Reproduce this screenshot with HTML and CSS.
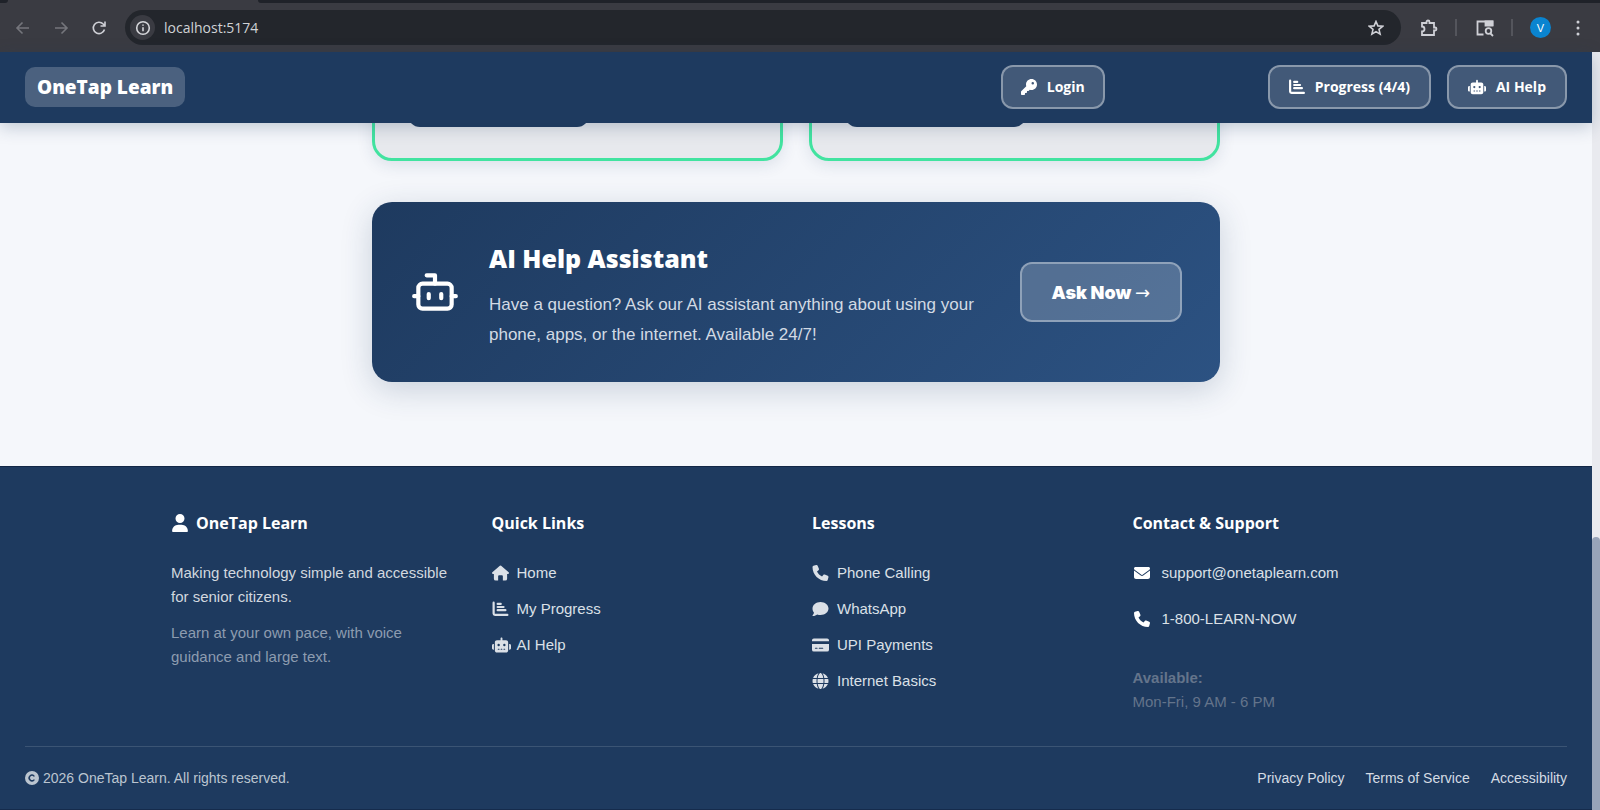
FILE: index.html
```
<!DOCTYPE html>
<html lang="en">
<head>
  <meta charset="UTF-8">
  <meta name="viewport" content="width=device-width, initial-scale=1.0">
  <title>OneTap Learn</title>
  <link rel="stylesheet" href="styles.css">
</head>
<body>
  <!-- icon set -->
  <svg class="sprite" aria-hidden="true">
    <symbol id="i-key" viewBox="0 0 512 512"><path fill-rule="evenodd" d="M336 352c97.200 0 176-78.800 176-176S433.200 0 336 0S160 78.800 160 176c0 18.700 2.900 36.800 8.300 53.700L7 391c-4.500 4.500-7 10.600-7 17v80c0 13.300 10.700 24 24 24h80c13.300 0 24-10.700 24-24V448h40c13.300 0 24-10.700 24-24V384h40c6.400 0 12.500-2.500 17-7l33.300-33.300c16.900 5.400 35 8.300 53.700 8.300zM376 96a40 40 0 1 1 0 80 40 40 0 1 1 0-80z"/></symbol>
    <symbol id="i-chart" viewBox="0 0 512 512"><path d="M36 52v348q0 44 44 44h396" fill="none" stroke="currentColor" stroke-width="70" stroke-linecap="round" stroke-linejoin="round"/><path d="M164 92h100M164 192h190M164 292h250" fill="none" stroke="currentColor" stroke-width="68" stroke-linecap="round"/></symbol>
    <symbol id="i-robot" viewBox="0 0 640 512"><path fill-rule="evenodd" d="M320 0c17.700 0 32 14.300 32 32V96H472c39.800 0 72 32.200 72 72V440c0 39.800-32.200 72-72 72H168c-39.800 0-72-32.200-72-72V168c0-39.800 32.200-72 72-72H288V32c0-17.700 14.300-32 32-32zM208 384c-8.800 0-16 7.200-16 16s7.200 16 16 16h32c8.800 0 16-7.200 16-16s-7.200-16-16-16H208zm96 0c-8.800 0-16 7.200-16 16s7.200 16 16 16h32c8.800 0 16-7.200 16-16s-7.200-16-16-16H304zm96 0c-8.800 0-16 7.200-16 16s7.200 16 16 16h32c8.800 0 16-7.200 16-16s-7.200-16-16-16H400zM264 256a40 40 0 1 0-80 0 40 40 0 1 0 80 0zm152 40a40 40 0 1 0 0-80 40 40 0 1 0 0 80zM48 224H64V416H48c-26.500 0-48-21.500-48-48V272c0-26.500 21.500-48 48-48zm544 0c26.500 0 48 21.500 48 48v96c0 26.500-21.500 48-48 48H576V224h16z"/></symbol>
    <symbol id="i-user" viewBox="0 0 448 512"><path d="M224 256A128 128 0 1 0 224 0a128 128 0 1 0 0 256zm-45.700 48C79.800 304 0 383.800 0 482.300C0 498.700 13.300 512 29.700 512h388.600c16.400 0 29.700-13.300 29.700-29.700C448 383.800 368.200 304 269.700 304z"/></symbol>
    <symbol id="i-home" viewBox="0 0 576 512"><path d="M266 9q22-18 44 0l254 224q14 14 10 30-6 24-30 24h-32v161q0 64-64 64h-80V368q0-32-32-32h-96q-32 0-32 32v144h-80q-64 0-64-64V287H32q-24 0-30-24-4-16 10-30z"/></symbol>
    <symbol id="i-phone" viewBox="0 0 512 512"><path d="M164.900 24.600c-7.700-18.600-28-28.500-47.400-23.200l-88 24C12.100 30.200 0 46 0 64C0 311.400 200.600 512 448 512c18 0 33.800-12.100 38.600-29.500l24-88c5.300-19.400-4.600-39.700-23.200-47.400l-96-40c-16.300-6.800-35.200-2.100-46.300 11.600L304.700 368C234.300 334.700 177.300 277.700 144 207.300L193.300 167c13.700-11.200 18.400-30 11.600-46.300z"/></symbol>
    <symbol id="i-comment" viewBox="0 0 512 512"><path d="M512 240c0 115-115 208-256 208-37 0-72-6-104-18-34 25-84 50-136 50-15 0-21-17-11-27 20-21 38-50 43-76C18 341 0 293 0 240 0 125 115 32 256 32s256 93 256 208z"/></symbol>
    <symbol id="i-card" viewBox="0 0 576 512"><path fill-rule="evenodd" d="M64 32h448q64 0 64 64v32H0V96q0-64 64-64zM0 224h576v192q0 64-64 64H64q-64 0-64-64zM112 352q-16 0-16 16t16 16h64q16 0 16-16t-16-16zM240 352q-16 0-16 16t16 16h128q16 0 16-16t-16-16z"/></symbol>
    <symbol id="i-globe" viewBox="0 0 512 512"><path d="M352 256c0 22-1 44-3 64H163c-2-20-3-42-3-64s1-44 3-64h186c2 20 3 42 3 64zm29-64h123a257 257 0 0 1 0 128H381c4-42 4-86 0-128zm112-32H376c-10-64-30-117-55-151 78 21 142 77 172 151zm-149 0H168c6-36 15-68 27-94 24-54 46-66 61-66s37 12 61 66c12 26 21 58 27 94zm-208 0H19C49 86 112 30 191 9c-25 34-45 87-55 151zM8 192h123c-4 42-4 86 0 128H8a257 257 0 0 1 0-128zm187 254c-12-26-21-58-27-94h176c-6 36-15 68-27 94-24 54-46 66-61 66s-37-12-61-66zm-59-94c10 64 30 117 55 151C112 482 49 426 19 352zm357 0c-30 74-94 130-172 151 25-34 45-87 55-151z"/></symbol>
    <symbol id="i-mail" viewBox="0 0 512 512"><path d="M48 64C21.500 64 0 85.500 0 112c0 15.100 7.100 29.300 19.200 38.400L236.800 313.600c11.400 8.500 27 8.500 38.400 0L492.800 150.400c12.100-9.100 19.200-23.300 19.200-38.400c0-26.500-21.500-48-48-48zM0 176v208c0 35.300 28.700 64 64 64h384c35.300 0 64-28.700 64-64V176L294.400 339.200c-22.800 17.100-54 17.100-76.800 0z"/></symbol>
    <symbol id="i-copy" viewBox="0 0 512 512"><path fill-rule="evenodd" d="M256 0a256 256 0 1 1 0 512 256 256 0 1 1 0-512zM200 200a80 80 0 0 1 113 0q17 15 33 0t0-34a128 128 0 1 0 0 180q16-18 0-34t-33 0a80 80 0 0 1-113-112z"/></symbol>
  </svg>

  <div class="toolbar">
    <div class="tab-strip"><span class="tab-left"></span><span class="tab-active"></span><span class="tab-right"></span></div>
    <div class="toolbar-row">
      <button class="tool dim" aria-label="Back"><svg viewBox="0 0 16 16"><path d="M14 8H2M7.500 2.500L2 8l5.500 5.500"/></svg></button>
      <button class="tool dim" aria-label="Forward"><svg viewBox="0 0 16 16"><path d="M2 8h12M8.500 2.500L14 8l-5.500 5.500"/></svg></button>
      <button class="tool" aria-label="Reload"><svg viewBox="0 0 16 16"><path d="M13.500 9.500a5.700 5.700 0 1 1-1.300-5.500L14 5.800M14 1.500v4.500H9.500"/></svg></button>
      <div class="address">
        <button class="site-info" aria-label="Site information"><svg viewBox="0 0 16 16"><circle cx="8" cy="8" r="6.300"/><path d="M8 7.200v4M8 4.400v1.400"/></svg></button>
        <input class="url" type="text" aria-label="Address" value="localhost:5174">
        <button class="tool" aria-label="Bookmark"><svg viewBox="0 0 16 16"><path d="M8 1.500l1.900 4.400 4.700.4-3.600 3.100 1.100 4.700L8 11.600l-4.100 2.500L5 9.400 1.400 6.300l4.700-.4z"/></svg></button>
      </div>
      <button class="tool ext" aria-label="Extensions"><svg viewBox="0 0 18 18"><path d="M2 4h4.500V3a1.500 1.500 0 0 1 3 0v1H14v4.500h1a1.500 1.500 0 0 1 0 3h-1V16H2v-3.500a2.300 2.300 0 0 0 0-5z"/></svg></button>
      <span class="divider"></span>
      <button class="tool ext" aria-label="Tab search"><svg viewBox="0 0 18 18"><path d="M7.500 15.500H1.500v-13h15v4.500M14.500 14.500l2.500 2.500"/><circle cx="12.500" cy="12" r="2.800"/><path class="solid" d="M9.500 2.500h7v4h-7z"/></svg></button>
      <span class="divider"></span>
      <button class="avatar">V</button>
      <button class="tool menu" aria-label="Menu"><svg viewBox="0 0 16 16"><path class="dots" d="M8 2v0M8 8v0M8 14v0"/></svg></button>
    </div>
  </div>

  <div class="window">
    <div class="page">
      <header class="header">
        <a class="logo" href="#">OneTap Learn</a>
        <nav class="nav">
          <button class="nav-btn login"><svg class="icon"><use href="#i-key"/></svg>Login</button>
          <button class="nav-btn"><svg class="icon"><use href="#i-chart"/></svg>Progress (4/4)</button>
          <button class="nav-btn"><svg class="icon wide"><use href="#i-robot"/></svg>AI Help</button>
        </nav>
      </header>

      <main class="main">
        <div class="lessons">
          <div class="lesson-card"><button class="lesson-btn" aria-label="Open lesson"></button></div>
          <div class="lesson-card"><button class="lesson-btn" aria-label="Open lesson"></button></div>
        </div>
        <section class="assistant">
          <svg class="bot" viewBox="0 0 24 24"><path d="M12 8V4H8"/><rect x="4" y="8" width="16" height="12" rx="2"/><path d="M2 14h2M20 14h2M15 13v2M9 13v2"/></svg>
          <div class="assistant-text">
            <h2>AI Help Assistant</h2>
            <p>Have a question? Ask our AI assistant anything about using your phone, apps, or the internet. Available 24/7!</p>
          </div>
          <button class="ask-btn">Ask Now <span class="arrow">→</span></button>
        </section>
      </main>

      <footer class="footer">
        <div class="footer-grid">
          <div>
            <h3><svg class="icon user"><use href="#i-user"/></svg>OneTap Learn</h3>
            <p>Making technology simple and accessible for senior citizens.</p>
            <p class="muted">Learn at your own pace, with voice guidance and large text.</p>
          </div>
          <div>
            <h3>Quick Links</h3>
            <ul class="links">
              <li><a href="#"><svg class="icon"><use href="#i-home"/></svg>Home</a></li>
              <li><a href="#"><svg class="icon"><use href="#i-chart"/></svg>My Progress</a></li>
              <li><a href="#"><svg class="icon robot"><use href="#i-robot"/></svg>AI Help</a></li>
            </ul>
          </div>
          <div>
            <h3>Lessons</h3>
            <ul class="links">
              <li><a href="#"><svg class="icon"><use href="#i-phone"/></svg>Phone Calling</a></li>
              <li><a href="#"><svg class="icon"><use href="#i-comment"/></svg>WhatsApp</a></li>
              <li><a href="#"><svg class="icon"><use href="#i-card"/></svg>UPI Payments</a></li>
              <li><a href="#"><svg class="icon"><use href="#i-globe"/></svg>Internet Basics</a></li>
            </ul>
          </div>
          <div>
            <h3>Contact &amp; Support</h3>
            <ul class="links contact">
              <li><a href="#"><svg class="icon"><use href="#i-mail"/></svg>support@onetaplearn.com</a></li>
              <li><a href="#"><svg class="icon"><use href="#i-phone"/></svg>1-800-LEARN-NOW</a></li>
            </ul>
            <p class="hours"><strong>Available:</strong><br>Mon-Fri, 9 AM - 6 PM</p>
          </div>
        </div>
        <div class="footer-bottom">
          <p class="copyright"><svg class="icon"><use href="#i-copy"/></svg>2026 OneTap Learn. All rights reserved.</p>
          <nav class="legal">
            <a href="#">Privacy Policy</a>
            <a href="#">Terms of Service</a>
            <a href="#">Accessibility</a>
          </nav>
        </div>
      </footer>
    </div>
    <div class="scrollbar"><div class="thumb"></div></div>
  </div>
</body>
</html>
```
FILE: styles.css
```
* {
  box-sizing: border-box;
}

body {
  margin: 0;
  height: 100vh;
  display: flex;
  flex-direction: column;
  overflow: hidden;
  font-family: "Liberation Sans", Arial, sans-serif;
  font-size: 15px;
  background: #f5f7fb;
}

h2, h3, p, ul {
  margin: 0;
  padding: 0;
}

a {
  color: inherit;
  text-decoration: none;
}

button {
  font-family: inherit;
  cursor: pointer;
}

.sprite {
  position: absolute;
  width: 0;
  height: 0;
}

.icon {
  width: 16px;
  height: 16px;
  fill: currentColor;
  flex: none;
}

/* browser bar */
.toolbar {
  background: #3a3b42;
  flex: none;
}

.tab-strip {
  height: 3px;
  display: flex;
}

.tab-left {
  width: 8px;
  background: #1f2229;
  border-bottom-right-radius: 3px;
}

.tab-active {
  width: 250px;
}

.tab-right {
  flex: 1;
  background: #1f2229;
  border-bottom-left-radius: 3px;
}

.toolbar-row {
  height: 49px;
  padding: 0 8px 0 4px;
  display: flex;
  align-items: center;
}

.tool {
  width: 38px;
  height: 32px;
  padding: 0;
  border: none;
  background: none;
  display: flex;
  align-items: center;
  justify-content: center;
  color: #cfd0d6;
}

.tool svg,
.site-info svg {
  width: 16px;
  height: 16px;
  fill: none;
  stroke: currentColor;
  stroke-width: 1.6;
}

.tool.dim {
  color: #75767c;
}

.tool.ext {
  width: 40px;
  margin-left: 8px;
}

.tool.ext svg {
  width: 18px;
  height: 18px;
  stroke-width: 1.8;
}

.tool .solid {
  fill: currentColor;
}

.tool .dots {
  stroke-width: 3;
  stroke-linecap: round;
}

.tool.menu {
  width: 28px;
  margin-left: 13px;
}

.address {
  flex: 1;
  height: 35px;
  margin-left: 7px;
  padding: 0 6px 0 5px;
  border-radius: 18px;
  background: #23262c;
  display: flex;
  align-items: center;
}

.site-info {
  width: 25px;
  height: 25px;
  padding: 0;
  border: none;
  border-radius: 50%;
  background: #3a3b42;
  color: #d5d6da;
  display: flex;
  align-items: center;
  justify-content: center;
}

.url {
  flex: 1;
  margin-left: 9px;
  padding: 0;
  border: none;
  outline: none;
  background: none;
  color: #d0d2d6;
  font-family: "Open Sans", sans-serif;
  font-size: 14px;
}

.divider {
  width: 2px;
  height: 17px;
  margin-left: 6px;
  background: #54555c;
}

.avatar {
  width: 21px;
  height: 21px;
  margin-left: 17px;
  padding: 0;
  border: none;
  border-radius: 50%;
  background: #0a84d0;
  color: #fff;
  font-size: 11px;
}

/* page */
.window {
  flex: 1;
  min-height: 0;
  display: flex;
}

.page {
  flex: 1;
  display: flex;
  flex-direction: column;
}

.scrollbar {
  width: 8px;
  background: #e9eaef;
  display: flex;
  flex-direction: column;
  justify-content: flex-end;
}

.thumb {
  height: 36%;
  background: #98a4b9;
  border-radius: 4px 4px 0 0;
}

.header {
  height: 71px;
  flex: none;
  padding: 0 25px 2px;
  display: flex;
  align-items: center;
  justify-content: space-between;
  background: #1e3a5f;
  box-shadow: 0 4px 16px rgba(30, 58, 95, 0.25);
  z-index: 2;
}

.logo {
  padding: 0 12px;
  line-height: 40px;
  border-radius: 10px;
  background: rgba(255, 255, 255, 0.2);
  color: #fff;
  font-family: "Open Sans", sans-serif;
  font-size: 19px;
  font-weight: 800;
}

.nav {
  display: flex;
  gap: 16px;
}

.nav-btn {
  height: 44px;
  padding: 0 19px;
  display: flex;
  align-items: center;
  gap: 10px;
  border: 2px solid rgba(255, 255, 255, 0.48);
  border-radius: 12px;
  background: rgba(255, 255, 255, 0.16);
  background-clip: padding-box;
  color: #fff;
  font-family: "Open Sans", sans-serif;
  font-size: 14px;
  font-weight: 700;
}

.nav-btn .wide {
  width: 18px;
}

.login {
  padding: 0 18px;
  margin-right: 147px;
}

.main {
  flex: 1;
  width: 848px;
  max-width: 100%;
  margin: 0 auto;
}

.lessons {
  display: grid;
  grid-template-columns: 1fr 1fr;
  gap: 26px;
  margin-top: -62px;
  margin-bottom: 41px;
}

.lesson-card {
  height: 100px;
  padding: 21px 33px;
  border: 3px solid #42e3a0;
  border-radius: 20px;
  background: #e7e9ed;
  box-shadow: 0 4px 16px rgba(30, 58, 95, 0.12);
}

.lesson-btn {
  width: 181px;
  height: 42px;
  border: none;
  border-radius: 12px;
  background: #1e3a5f;
}

.assistant {
  padding: 32px 38px;
  display: flex;
  align-items: center;
  gap: 29px;
  border-radius: 20px;
  background: linear-gradient(135deg, #1e3a5f, #2c5282);
  box-shadow: 0 8px 32px rgba(30, 58, 95, 0.2);
  color: #fff;
}

.bot {
  width: 50px;
  height: 50px;
  flex: none;
  fill: none;
  stroke: currentColor;
  stroke-width: 2;
  stroke-linecap: round;
  stroke-linejoin: round;
}

.assistant-text {
  flex: 1;
  padding-top: 4px;
}

.assistant h2 {
  margin-bottom: 12px;
  font-family: "Open Sans", sans-serif;
  font-size: 25px;
  font-weight: 800;
  line-height: 40px;
}

.assistant p {
  font-size: 17px;
  line-height: 30px;
  color: #d2dae4;
}

.ask-btn {
  height: 60px;
  padding: 0 30px;
  border: 2px solid rgba(255, 255, 255, 0.48);
  border-radius: 12px;
  background: rgba(255, 255, 255, 0.2);
  background-clip: padding-box;
  color: #fff;
  font-family: Inter, sans-serif;
  font-size: 18px;
  font-weight: 900;
  white-space: nowrap;
}

.arrow {
  font-family: "DejaVu Sans", sans-serif;
  font-weight: 400;
}

.footer {
  flex: none;
  padding: 40px 25px 20px;
  border-top: 1px solid #122746;
  border-bottom: 1px solid #152b4c;
  background: #1e3a5f;
  color: #fff;
}

.footer-grid {
  max-width: 1250px;
  margin: 0 auto;
  display: grid;
  grid-template-columns: repeat(4, 1fr);
  gap: 32px;
}

.footer h3 {
  margin-bottom: 22px;
  display: flex;
  align-items: center;
  gap: 7px;
  font-family: "Open Sans", sans-serif;
  font-size: 16px;
  font-weight: 700;
  line-height: 32px;
}

.user {
  width: 18px;
  height: 18px;
}

.footer p {
  line-height: 24px;
  color: #d2d8df;
}

.footer .muted {
  margin-top: 12px;
  color: #8d9cb0;
}

.links {
  list-style: none;
  display: flex;
  flex-direction: column;
  gap: 12px;
}

.links a {
  display: flex;
  align-items: center;
  gap: 8px;
  line-height: 24px;
  color: #dbe0e7;
}

.links .icon {
  width: 17px;
}

.links .robot {
  width: 19px;
  margin-right: -2px;
}

.contact {
  gap: 22px;
}

.contact a {
  gap: 11px;
}

.contact .icon {
  width: 18px;
  color: #fff;
}

.footer .hours {
  margin-top: 35px;
  color: #64748b;
}

.footer-bottom {
  margin-top: 32px;
  padding-top: 20px;
  border-top: 1px solid #3b5474;
  display: flex;
  justify-content: space-between;
  font-size: 14px;
}

.footer .copyright {
  display: flex;
  align-items: center;
  gap: 4px;
  line-height: 22px;
  color: #bbc5d0;
}

.copyright .icon {
  width: 14px;
  height: 14px;
}

.legal {
  display: flex;
  gap: 21px;
  line-height: 22px;
  color: #d5dce4;
}
```
